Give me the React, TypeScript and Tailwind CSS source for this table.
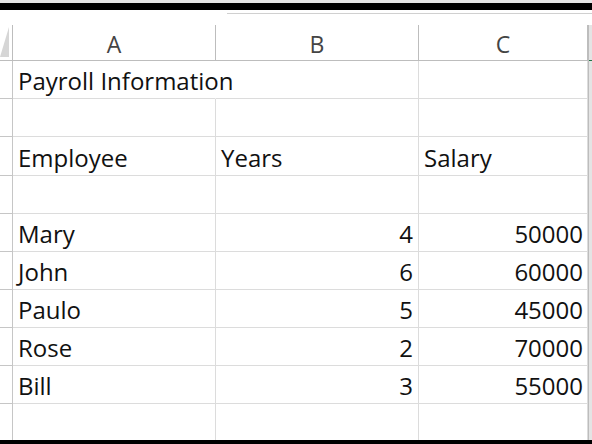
const rows: [string, string, string][] = [
  ["Payroll Information", "", ""],
  ["", "", ""],
  ["Employee", "Years", "Salary"],
  ["", "", ""],
  ["Mary", "4", "50000"],
  ["John", "6", "60000"],
  ["Paulo", "5", "45000"],
  ["Rose", "2", "70000"],
  ["Bill", "3", "55000"],
  ["", "", ""],
];

const isNum = (v: string) => /^\d+$/.test(v);

export default function App() {
  return (
    <div
      className="relative h-[444px] w-[592px] overflow-hidden bg-white text-[#111]"
      style={{ fontFamily: '"Open Sans", "Liberation Sans", sans-serif' }}
    >
      {/* window frame strip */}
      <div className="h-[3px] bg-[#e6e6e6]" />
      <div className="h-[7px] bg-black" />
      <div className="h-[15px] pt-[3px]">
        <div className="ml-[227px] h-px bg-[#d0d0d0]" />
      </div>

      <div className="grid grid-cols-[13px_203px_203px_169px_4px]">
        {/* header row */}
        <div className="relative h-[36px] border-r border-b border-[#bdbdbd]">
          <div className="absolute bottom-[3px] left-0 h-0 w-0 border-b-[30px] border-l-[9px] border-b-[#d6d6d6] border-l-transparent" />
        </div>
        {["A", "B", "C"].map((c) => (
          <div
            key={c}
            className="flex h-[36px] items-end justify-center border-r border-b border-[#bdbdbd] pb-[4px] text-[23px] leading-none text-[#444]"
          >
            {c}
          </div>
        ))}
        <div className="h-[36px] border-l border-b border-[#bdbdbd] bg-[#e4e4e4]">
          <div className="mt-[35px] h-[2px] bg-[#217346]" />
        </div>

        {rows.map((r, i) => (
          <div key={i} className="contents">
            <div className={`${i === 2 ? "h-[39px]" : "h-[38px]"} border-r border-b border-[#c6c6c6]`} />
            {r.map((v, j) => (
              <div
                key={j}
                className={`flex ${i === 2 ? "h-[39px]" : "h-[38px]"} items-end overflow-visible whitespace-nowrap border-r border-b border-[#dcdcdc] pb-[5px] pl-[5px] text-[24px] leading-none ${
                  isNum(v) ? "justify-end" : "justify-start"
                } ${j === 2 ? "pr-[4px]" : "pr-[5px]"} ${j === 0 && i === 0 ? "relative z-10 border-r-transparent" : ""}`}
              >
                {v}
              </div>
            ))}
            <div className="border-l border-[#bdbdbd] bg-[#e4e4e4]" />
          </div>
        ))}
      </div>

      <div className="absolute bottom-0 left-0 h-[4px] w-full bg-black" />
    </div>
  );
}
